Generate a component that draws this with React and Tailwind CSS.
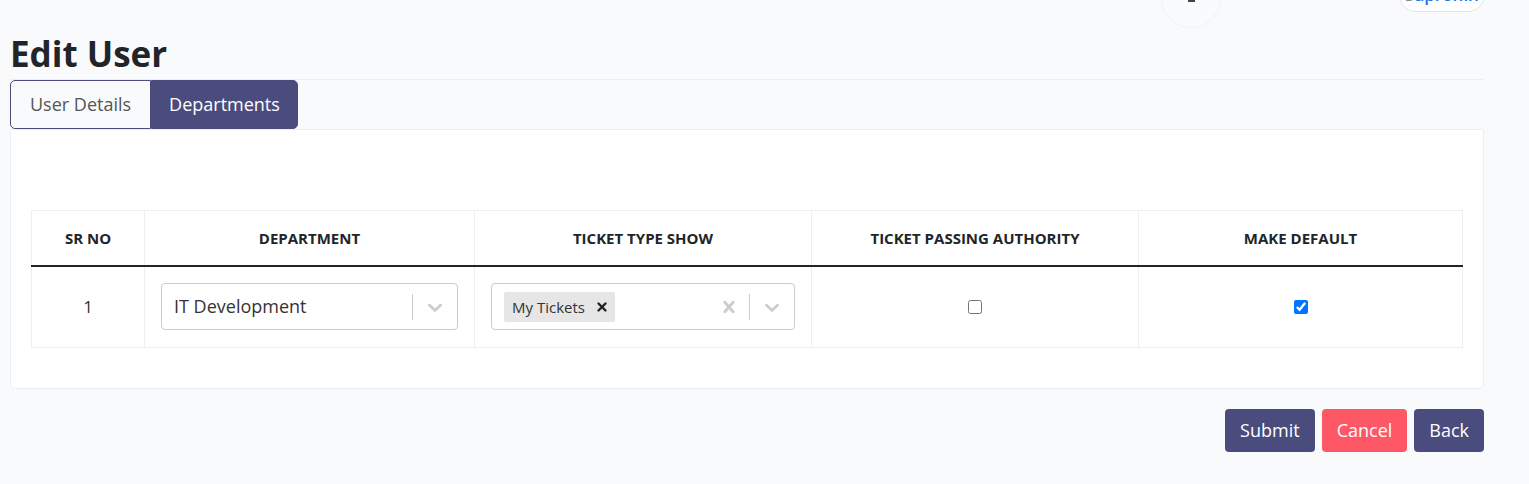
import React, { useState } from 'react'

const Chevron = () => (
  <svg width="24" height="24" viewBox="0 0 20 20" fill="#cccccc">
    <path d="M4.516 7.548c0.436-0.446 1.043-0.481 1.576 0l3.908 3.747 3.908-3.747c0.533-0.481 1.141-0.446 1.574 0 0.436 0.445 0.408 1.197 0 1.615-0.406 0.418-4.695 4.502-4.695 4.502-0.217 0.223-0.502 0.335-0.787 0.335s-0.57-0.112-0.789-0.335c0 0-4.287-4.084-4.695-4.502s-0.436-1.17 0-1.615z" />
  </svg>
)

const Cross = ({ size = 24, color = '#cccccc' }) => (
  <svg width={size} height={size} viewBox="0 0 20 20" fill={color}>
    <path d="M14.348 14.849c-0.469 0.469-1.229 0.469-1.697 0l-2.651-3.030-2.651 3.029c-0.469 0.469-1.229 0.469-1.697 0-0.469-0.469-0.469-1.229 0-1.697l2.758-3.15-2.759-3.152c-0.469-0.469-0.469-1.228 0-1.697s1.228-0.469 1.697 0l2.652 3.031 2.651-3.031c0.469-0.469 1.228-0.469 1.697 0s0.469 1.229 0 1.697l-2.758 3.152 2.758 3.15c0.469 0.469 0.469 1.229 0 1.698z" />
  </svg>
)

const App = () => {
  const [tab, setTab] = useState('departments')
  const [rows, setRows] = useState([
    { id: 1, department: 'IT Development', types: ['My Tickets'], authority: false, isDefault: true },
  ])

  function toggle(id, key) {
    setRows(rows.map((r) => (r.id === id ? { ...r, [key]: !r[key] } : r)))
  }

  return (
    <div className="min-h-[484px] bg-[#f9fafc] px-[10px] text-[#212529]" style={{ fontFamily: '"Open Sans", "Liberation Sans", sans-serif' }}>
      {/* header, scrolled off */}
      <div className="h-[28px] overflow-hidden flex justify-end items-end pr-[34px]">
        <div className="w-[60px] h-[60px] rounded-full border border-[#f1f2f4] bg-[#fafbfc] flex items-end justify-center mr-[178px] self-end">
          <div className="w-[7px] h-[3px] bg-[#444] mb-[25px]"></div>
        </div>
        <div className="self-start -mt-[22px] h-[34px] w-[86px] rounded-full border border-[#e2e4e8] bg-white flex items-center justify-center text-[17px] font-semibold text-[#1d72e8]">
          <span className="text-[#888]">S</span>apronin
        </div>
      </div>

      <h1 className="text-[35px] font-bold leading-[51px] border-b border-[#eceef1] mr-[35px]">Edit User</h1>

      <div className="flex">
        <button
          onClick={() => setTab('user')}
          className={`h-[49px] px-[19px] text-[18px] border border-[#4a4c7e] rounded-l-[5px] ${tab === 'user' ? 'bg-[#4a4c7e] text-white' : 'bg-[#f9fafc] text-[#555]'}`}
        >
          User Details
        </button>
        <button
          onClick={() => setTab('departments')}
          className={`h-[49px] px-[17px] text-[18px] border border-[#4a4c7e] rounded-r-[5px] ${tab === 'departments' ? 'bg-[#4a4c7e] text-white' : 'bg-[#f9fafc] text-[#555]'}`}
        >
          Departments
        </button>
      </div>

      <div className="mr-[35px] bg-white border border-[#eceef1] rounded-b-[5px] px-[20px] pt-[80px] pb-[40px]">
        <table className="w-full border-collapse border border-[#eeeeee] text-center">
          <thead>
            <tr className="h-[55px] text-[15px] font-bold uppercase border-b-2 border-[#212529]">
              <th className="w-[113px] border-r border-[#eeeeee]">Sr No</th>
              <th className="w-[330px] border-r border-[#eeeeee]">Department</th>
              <th className="w-[337px] border-r border-[#eeeeee]">Ticket Type Show</th>
              <th className="w-[327px] border-r border-[#eeeeee]">Ticket Passing Authority</th>
              <th>Make Default</th>
            </tr>
          </thead>
          <tbody>
            {rows.map((r) => (
              <tr key={r.id} className="h-[82px]">
                <td className="border-r border-[#eeeeee] text-[17px] text-[#333]">{r.id}</td>
                <td className="border-r border-[#eeeeee] px-[16px]">
                  <div className="h-[47px] border border-[#cccccc] rounded-[4px] flex items-center bg-white">
                    <span className="flex-1 text-left pl-[12px] text-[18px] text-[#333]">{r.department}</span>
                    <span className="w-px h-[26px] bg-[#cccccc]"></span>
                    <span className="px-[10px] flex items-center"><Chevron /></span>
                  </div>
                </td>
                <td className="border-r border-[#eeeeee] px-[16px]">
                  <div className="h-[47px] border border-[#cccccc] rounded-[4px] flex items-center bg-white">
                    <div className="flex-1 flex pl-[12px]">
                      {r.types.map((t) => (
                        <span key={t} className="h-[30px] bg-[#e6e6e6] rounded-[2px] flex items-center pl-[8px] pr-[6px] text-[15px] text-[#333]">
                          {t}
                          <span className="ml-[10px] flex items-center">
                            <svg width="14" height="14" viewBox="0 0 14 14" stroke="#222" strokeWidth="2.4" strokeLinecap="round">
                              <path d="M3.5 3.5 L10.5 10.5 M10.5 3.5 L3.5 10.5" />
                            </svg>
                          </span>
                        </span>
                      ))}
                    </div>
                    <span className="px-[8px] flex items-center"><Cross /></span>
                    <span className="w-px h-[26px] bg-[#cccccc]"></span>
                    <span className="px-[10px] flex items-center"><Chevron /></span>
                  </div>
                </td>
                <td className="border-r border-[#eeeeee]">
                  <input type="checkbox" checked={r.authority} onChange={() => toggle(r.id, 'authority')} className="w-[14px] h-[14px] align-middle -mt-[3px]" />
                </td>
                <td>
                  <input type="checkbox" checked={r.isDefault} onChange={() => toggle(r.id, 'isDefault')} className="w-[14px] h-[14px] align-middle -mt-[3px]" />
                </td>
              </tr>
            ))}
          </tbody>
        </table>
      </div>

      <div className="flex justify-end gap-[7px] mr-[35px] mt-[20px]">
        <button className="h-[43px] px-[15px] rounded-[4px] bg-[#4a4c7e] text-white text-[18px]">Submit</button>
        <button className="h-[43px] px-[15px] rounded-[4px] bg-[#fe5766] text-white text-[18px]">Cancel</button>
        <button className="h-[43px] px-[15px] rounded-[4px] bg-[#4a4c7e] text-white text-[18px]">Back</button>
      </div>
    </div>
  )
}

export default App
